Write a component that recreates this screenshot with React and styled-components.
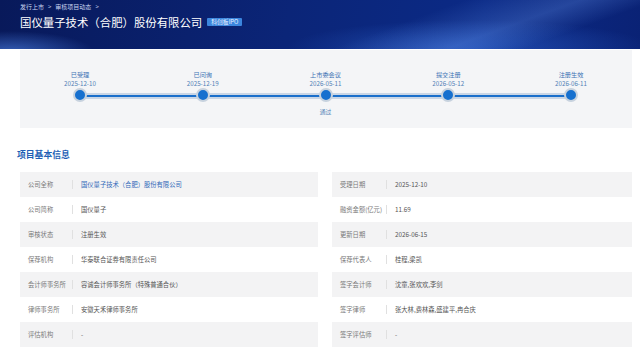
import React from "react";
import styled, { createGlobalStyle } from "styled-components";

const Global = createGlobalStyle`
  html, body { margin: 0; padding: 0; background: #fff; }
  body { font-family: "Noto Sans CJK SC", "Noto Sans", sans-serif; width: 640px; height: 350px; overflow: hidden; }
`;

const Header = styled.header`
  height: 49px;
  padding: 3px 20px 0;
  box-sizing: border-box;
  background:
    linear-gradient(160deg, rgba(255,255,255,0) 60%, rgba(120,170,255,0.25) 75%, rgba(255,255,255,0) 85%),
    radial-gradient(ellipse 120px 30px at 10px 52px, rgba(90,150,255,0.55), rgba(90,150,255,0) 70%),
    radial-gradient(ellipse 260px 40px at 470px 48px, rgba(60,120,230,0.45), rgba(60,120,230,0) 70%),
    linear-gradient(100deg, #08195a 0%, #0b2578 45%, #0b2a86 75%, #0a2275 100%);
  color: #fff;
`;

const Crumbs = styled.div`
  font-size: 6px;
  line-height: 8px;
  color: #c8d4f0;
  display: flex;
  gap: 4px;
`;

const TitleRow = styled.div`
  display: flex;
  align-items: center;
  gap: 5px;
  margin-top: 3px;
`;

const Title = styled.h1`
  margin: 0;
  font-size: 11.4px;
  line-height: 16px;
  font-weight: 400;
  color: #fff;
`;

const Badge = styled.span`
  background: #3b86de;
  color: #e9f2ff;
  font-size: 5.8px;
  line-height: 8px;
  padding: 0 4px;
  border-radius: 1px;
`;

const TimelinePanel = styled.section`
  margin: 1px 8px 0 20px;
  height: 78px;
  background: #f4f5f7;
  padding: 20px 36px 0 35px;
  box-sizing: border-box;
`;

const Steps = styled.div`
  display: flex;
  justify-content: space-between;
  position: relative;
  &::before {
    content: "";
    position: absolute;
    left: 25px;
    right: 25px;
    top: 23px;
    height: 6px;
    background: #c9d6e6;
    border-radius: 3px;
  }
  &::after {
    content: "";
    position: absolute;
    left: 25px;
    right: 25px;
    top: 25px;
    height: 2px;
    background: #1a6fcb;
  }
`;

const Step = styled.div`
  width: 50px;
  display: flex;
  flex-direction: column;
  align-items: center;
  position: relative;
  z-index: 1;
`;

const StepLabel = styled.div`
  font-size: 6.2px;
  line-height: 9px;
  color: #3d72b4;
  white-space: nowrap;
`;

const StepDate = styled.div`
  font-size: 6.2px;
  line-height: 9px;
  color: #5080b6;
  white-space: nowrap;
`;

const Dot = styled.div`
  width: 10px;
  height: 10px;
  border-radius: 50%;
  background: #1670cf;
  border: 2.5px solid #c7d2de;
`;

const StepNote = styled.div`
  margin-top: 5px;
  font-size: 5.8px;
  line-height: 9px;
  color: #5080b6;
`;

const SectionTitle = styled.h2`
  margin: 21px 0 0 17px;
  font-size: 8.8px;
  line-height: 12px;
  font-weight: 700;
  color: #1d5fb5;
`;

const Tables = styled.div`
  margin: 11px 8px 0 20px;
  display: grid;
  grid-template-columns: 298px 300px;
  column-gap: 14px;
`;

const Column = styled.div`
  display: flex;
  flex-direction: column;
`;

const Row = styled.div`
  height: 25px;
  display: flex;
  align-items: center;
  background: ${(p) => (p.$shaded ? "#f3f3f4" : "#fff")};
  font-size: 6.3px;
`;

const Label = styled.div`
  width: ${(p) => p.$w}px;
  padding-left: 8px;
  box-sizing: border-box;
  color: #7a7a7a;
  white-space: nowrap;
  border-right: 1px solid #e0e0e0;
  line-height: 9px;
`;

const Value = styled.div`
  padding-left: 8px;
  color: ${(p) => (p.$link ? "#3069b9" : "#555")};
  white-space: nowrap;
`;

const steps = [
  { label: "已受理", date: "2025-12-10" },
  { label: "已问询", date: "2025-12-19" },
  { label: "上市委会议", date: "2026-05-11", note: "通过" },
  { label: "提交注册", date: "2026-05-12" },
  { label: "注册生效", date: "2026-06-11" },
];

const left = [
  ["公司全称", "国仪量子技术（合肥）股份有限公司", true],
  ["公司简称", "国仪量子"],
  ["审核状态", "注册生效"],
  ["保荐机构", "华泰联合证券有限责任公司"],
  ["会计师事务所", "容诚会计师事务所（特殊普通合伙）"],
  ["律师事务所", "安徽天禾律师事务所"],
  ["评估机构", "-"],
];

const right = [
  ["受理日期", "2025-12-10"],
  ["融资金额(亿元)", "11.69"],
  ["更新日期", "2026-06-15"],
  ["保荐代表人", "桂程,梁凯"],
  ["签字会计师", "沈童,张欢欢,李剑"],
  ["签字律师", "张大林,费林森,盛建平,冉合庆"],
  ["签字评估师", "-"],
];

export default function App() {
  return (
    <>
      <Global />
      <Header>
        <Crumbs>
          <span>发行上市</span>
          <span>&gt;</span>
          <span>审核项目动态</span>
          <span>&gt;</span>
        </Crumbs>
        <TitleRow>
          <Title>国仪量子技术（合肥）股份有限公司</Title>
          <Badge>科创板IPO</Badge>
        </TitleRow>
      </Header>
      <TimelinePanel>
        <Steps>
          {steps.map((s) => (
            <Step key={s.label}>
              <StepLabel>{s.label}</StepLabel>
              <StepDate>{s.date}</StepDate>
              <Dot />
              {s.note && <StepNote>{s.note}</StepNote>}
            </Step>
          ))}
        </Steps>
      </TimelinePanel>
      <SectionTitle>项目基本信息</SectionTitle>
      <Tables>
        <Column>
          {left.map(([l, v, link], i) => (
            <Row key={l} $shaded={i % 2 === 0}>
              <Label $w={53}>{l}</Label>
              <Value $link={link}>{v}</Value>
            </Row>
          ))}
        </Column>
        <Column>
          {right.map(([l, v], i) => (
            <Row key={l} $shaded={i % 2 === 0}>
              <Label $w={55}>{l}</Label>
              <Value>{v}</Value>
            </Row>
          ))}
        </Column>
      </Tables>
    </>
  );
}
